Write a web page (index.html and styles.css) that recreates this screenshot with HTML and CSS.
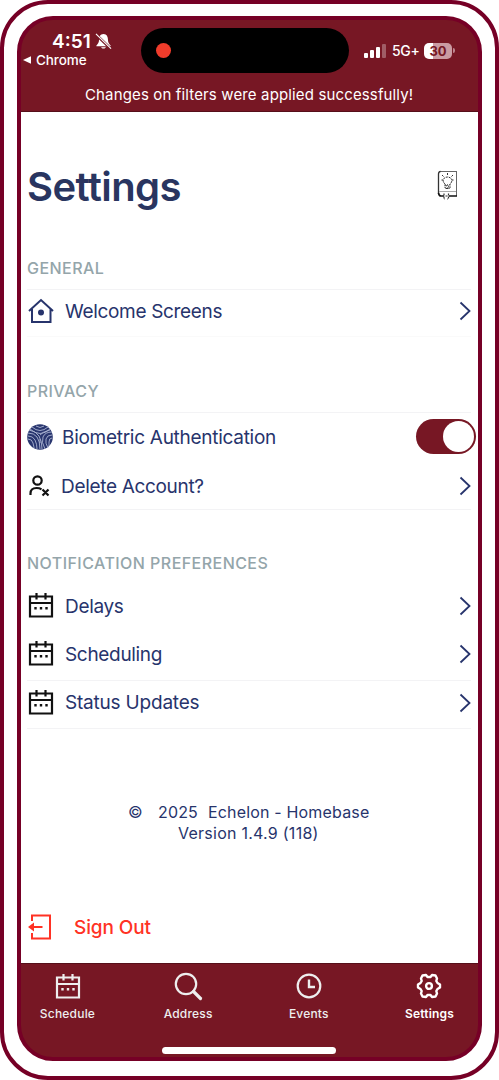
FILE: index.html
```html
<!DOCTYPE html>
<html lang="en">
<head>
<meta charset="utf-8">
<title>Settings</title>
<link rel="stylesheet" href="styles.css">
</head>
<body>
<svg class="defs" width="0" height="0">
  <symbol id="calendar" viewBox="0 0 26 26"><path d="M2 4.500h22v20H2zM1 11h24M8.500 1v6.500M17.500 1v6.500" fill="none" stroke="currentColor" stroke-width="2.200"/><path d="M6.300 15h2.400v2.400H6.300zM11.800 15h2.400v2.400h-2.400zM17.300 15h2.400v2.400h-2.400z" fill="currentColor"/></symbol>
  <symbol id="chevron" viewBox="0 0 12 20"><path d="M1.500 1.500 10.500 10 1.500 18.500" fill="none" stroke="currentColor" stroke-width="1.800"/></symbol>
</svg>
<div class="device">
<div class="screen">
  <header class="header">
    <div class="status">
      <div class="status-left">
        <div class="clock"><span class="time">4:51</span>
          <svg class="bell" viewBox="0 0 18 18"><path d="M9 1C5.500 1 4.300 4 4.300 7c0 3-1.200 4.600-2.800 6.200V14h15v-.8C14.900 11.600 13.700 10 13.700 7c0-3-1.200-6-4.700-6zM6.500 15h5c-.5 2-4.500 2-5 0z" fill="#fff"/><path d="m1 1.500 16 15.500" stroke="#771724" stroke-width="3"/><path d="m1 1 16 15.500" stroke="#fff" stroke-width="1.200"/></svg>
        </div>
        <div class="back"><svg class="back-arrow" viewBox="0 0 8 8"><path d="M0 4 8 .2v7.600z" fill="#fff"/></svg><span>Chrome</span></div>
      </div>
      <div class="island"><span class="rec"></span></div>
      <div class="status-right">
        <svg class="signal" viewBox="0 0 22 14"><g fill="#fff"><rect y="9" width="4" height="5" rx="1"/><rect x="6" y="6" width="4" height="8" rx="1"/><rect x="12" y="3" width="4" height="11" rx="1"/><rect x="18" width="4" height="14" rx="1" opacity=".3"/></g></svg>
        <span class="network">5G+</span>
        <span class="battery">30</span><span class="nub"></span>
      </div>
    </div>
    <div class="notice"><span>Changes on filters were applied successfully!</span></div>
  </header>

  <main class="content">
    <div class="title-row">
      <h1 class="title">Settings</h1>
      <svg class="guide" viewBox="0 0 22 30"><g fill="none" stroke="#333"><path d="M3 1.500h16.500v20H3" stroke="#666"/><path d="M1.500 24V4q0-2.500 2-2.500" stroke-width="1.300"/><path d="M2 21.500h18" stroke="#aaa"/><path d="M19.500 1v25" stroke="#666"/><path d="M1.500 23q.5 3 2.500 3h3M12 26h8" stroke="#111" stroke-width="1.600"/><path d="M7 23.500v5.500h1M11.500 23.500v5.500h-1.200M8.500 26h2" stroke-width="1.200" stroke-dasharray="2 1"/><path d="M8 14c-3.500-3-1.500-7 2.500-7s6 4 2.500 7v4H8zM9 18.500h3.500M8.500 14.500l1 2 1-2 1 2 1-2" stroke-dasharray="2 .8"/><path d="M10.500 3v2M5 5l1.500 1.500M16 5l-1.500 1.500M4.500 10H6M15 10h1.500"/></g></svg>
    </div>

    <section class="group general">
      <h2 class="label">GENERAL</h2>
      <div class="row welcome line-top">
        <svg class="icon home-icon" viewBox="0 0 26 26"><path d="M1 13 13 2l12 11M4 11v13h18.500V11" fill="none" stroke="currentColor" stroke-width="2"/><circle cx="13" cy="14.500" r="3" fill="currentColor"/></svg>
        <span class="text t-welcome">Welcome Screens</span><svg class="chevron"><use href="#chevron"/></svg>
      </div>
    </section>

    <section class="group privacy">
      <h2 class="label">PRIVACY</h2>
      <div class="row bio line-top">
        <svg class="icon finger" viewBox="0 0 26 26"><circle cx="13" cy="13" r="12.800" fill="#29366f"/><g fill="none" stroke="#adb5d3" stroke-width=".9"><path d="M5 3q8 7 16 0M3 5q10 9 20 0M9 2q4 3 8 0M1 9q6 0 9 4t3 12M1 12q5 0 7 4t2 9M1 15q4 0 5 4t1 5M2 6q7 1 10 6t3 13M25 8q-7 0-9 5t2 12M25 11q-5 0-6 4t2 9M25 14q-3 0-3 4t0 4M13 11q2-3 10-5M13 15v4"/></g></svg>
        <span class="text t-bio">Biometric Authentication</span><span class="toggle"><span class="knob"></span></span>
      </div>
      <div class="row line-bottom">
        <svg class="icon person" viewBox="0 0 24 24"><g fill="none" stroke="#111" stroke-width="2.200"><circle cx="9.500" cy="6.500" r="4.200"/><path d="M2.500 21v-1.500c0-4 3-5.500 6-5.500 2 0 3.500.3 5 1.300M14.500 15.500l6 6M20.500 15.500l-6 6"/></g></svg>
        <span class="text t-delete">Delete Account?</span><svg class="chevron"><use href="#chevron"/></svg>
      </div>
    </section>

    <section class="group prefs">
      <h2 class="label l-prefs">NOTIFICATION PREFERENCES</h2>
      <div class="row"><svg class="icon black"><use href="#calendar"/></svg><span class="text">Delays</span><svg class="chevron"><use href="#chevron"/></svg></div>
      <div class="row sched line-bottom"><svg class="icon black"><use href="#calendar"/></svg><span class="text">Scheduling</span><svg class="chevron"><use href="#chevron"/></svg></div>
      <div class="row line-bottom updates"><svg class="icon black"><use href="#calendar"/></svg><span class="text t-status">Status Updates</span><svg class="chevron"><use href="#chevron"/></svg></div>
    </section>

    <div class="about"><div class="copyright"><span class="copy-mark">©</span><span class="year">2025</span><span>Echelon - Homebase</span></div><div class="version">Version 1.4.9 (118)</div></div>

    <div class="signout">
      <svg class="exit" viewBox="0 0 24 26"><path d="M4 7V1.500h18v23H4V19M3 13h11.500" fill="none" stroke="#ff3224" stroke-width="2"/><path d="M0 13 6 8.500v9z" fill="#ff3224"/></svg>
      <span>Sign Out</span>
    </div>
  </main>

  <nav class="tabs">
    <div class="tab"><svg class="tab-icon"><use href="#calendar"/></svg><span>Schedule</span></div>
    <div class="tab"><svg class="tab-icon" viewBox="0 0 26 26"><circle cx="11" cy="11" r="10.200" fill="none" stroke="#eee" stroke-width="2.200"/><path d="m18.500 18.500 7 7" stroke="#eee" stroke-width="3.200" stroke-linecap="round"/></svg><span>Address</span></div>
    <div class="tab"><svg class="tab-icon" viewBox="0 0 26 26"><circle cx="13" cy="13" r="11.300" fill="none" stroke="#eee" stroke-width="2.200"/><path d="M13 6.500V14h6" fill="none" stroke="#eee" stroke-width="2.400"/></svg><span>Events</span></div>
    <div class="tab active"><svg class="tab-icon" viewBox="0 0 26 26"><g fill="none" stroke="#fff" stroke-width="2.400" stroke-linejoin="round"><path d="M6.500 2.500 10 2l1.500 2h3L16 2l3.500.5 1.500 3-.7 2.500 1.200 2L24 11.500v3L21.500 16l-1.200 2 .7 2.500-1.500 3L16 24l-1.500-2h-3L10 24l-3.500-.5-1.500-3 .7-2.500-1.200-2L2 14.500v-3L4.500 10l1.200-2L5 5.500z"/><circle cx="13" cy="13" r="2.900"/></g></svg><span>Settings</span></div>
    <div class="home"></div>
  </nav>
</div>
</div>
</body>
</html>
```
FILE: styles.css
```css
* { box-sizing: border-box; }
body { margin: 0; background: #fff; font-family: Inter, "Liberation Sans", sans-serif; color: #27346c; }
svg { display: block; flex: none; overflow: visible; }
.defs { position: absolute; }
.device { width: 499px; height: 1080px; border: 4px solid #760026; border-radius: 48px; padding: 12px 13px 15px; }
.screen { height: 1045px; border: 4px solid #760026; border-radius: 36px; overflow: hidden; display: flex; flex-direction: column; background: #771724; }
.header { height: 92px; color: #fff; border-bottom: 1px solid #560f1a; flex: none; }
.status { height: 60px; display: flex; padding-top: 8px; }
.status-left { width: 120px; padding-top: 3px; }
.clock { display: flex; height: 21px; align-items: center; padding-left: 31px; gap: 4px; }
.time { font-size: 19px; font-weight: 600; width: 39px; white-space: nowrap; }
.bell { width: 17px; height: 17px; }
.back { display: flex; align-items: center; height: 16px; padding-left: 2px; gap: 5px; font-size: 13.500px; font-weight: 500; letter-spacing: -.1px; }
.back-arrow { width: 8px; height: 8px; }
.island { width: 208px; height: 45px; border-radius: 23px; background: #000; padding: 15px; }
.rec { display: block; width: 15px; height: 15px; border-radius: 50%; background: #f03c2b; }
.status-right { display: flex; height: 45px; align-items: center; padding-left: 15px; }
.signal { width: 22px; height: 14px; }
.network { width: 28px; margin-left: 6px; font-size: 14px; font-weight: 500; letter-spacing: -.3px; }
.battery { width: 28px; height: 16px; margin-left: 4px; border-radius: 5px; background: linear-gradient(90deg, #fff 9px, #cb9ba2 9px); color: #771724; font-size: 13px; line-height: 16px; font-weight: 700; text-align: center; }
.nub { width: 2px; height: 5px; margin-left: 1px; border-radius: 0 2px 2px 0; background: #bd858e; }
.notice { height: 29px; display: flex; align-items: center; padding-left: 64px; font-size: 15px; letter-spacing: .14px; white-space: nowrap; }
.content { height: 851px; flex: none; padding: 0 7px 0 6px; background: #fff; }
.title-row { height: 143px; display: flex; justify-content: space-between; padding: 50px 13px 0 0; }
.title { margin: 0; font-size: 40px; line-height: 50px; font-weight: 600; letter-spacing: -.6px; color: #293560; }
.guide { width: 22px; height: 30px; margin-top: 8px; margin-right: -1px; }
.label { margin: 0; height: 34px; line-height: 26px; font-size: 16px; font-weight: 500; letter-spacing: .45px; color: #94a5aa; white-space: nowrap; }
.group { display: flex; flex-direction: column; }
.general { height: 123px; }
.privacy { height: 172px; }
.row { height: 48px; display: flex; align-items: center; border: 0 solid #f3f3f5; flex: none; }
.line-top { border-top-width: 1px; }
.line-bottom { border-bottom-width: 1px; }
.welcome { padding-bottom: 4px; border-bottom: 1px solid #fafafa; }
.home-icon { margin-top: -1px; }
.icon { width: 26px; height: 26px; margin-left: 1px; }
.text { flex: 1; margin-left: 11px; font-size: 19px; letter-spacing: -.32px; white-space: nowrap; }
.chevron { width: 12px; height: 20px; }
.black { color: #111; margin-top: -2px; }
.bio { height: 50px; }
.finger { margin-left: 0; margin-top: -2px; }
.t-bio { margin-left: 9px; letter-spacing: -.28px; }
.toggle { width: 60px; height: 35px; border-radius: 18px; background: #771724; display: flex; justify-content: flex-end; padding: 2px; margin: -3px -5px 0 0; flex: none; }
.knob { width: 31px; height: 31px; border-radius: 50%; background: #fff; }
.person { width: 24px; height: 24px; }
.t-delete { margin-left: 9px; padding-top: 1px; }
.prefs { height: 252px; }
.l-prefs { height: 32px; }
.t-status { letter-spacing: -.2px; }
.sched { height: 51px; padding-bottom: 2px; }
.updates { padding-bottom: 4px; }
.about { font-size: 16px; line-height: 20px; height: 102px; letter-spacing: .17px; }
.copyright { display: flex; padding-left: 101px; white-space: pre; }
.copy-mark { width: 30px; }
.year { width: 50px; }
.version { padding-left: 151px; line-height: 22px; letter-spacing: .25px; }
.signout { display: flex; height: 26px; align-items: center; gap: 22px; color: #ff3224; font-size: 19px; font-weight: 500; letter-spacing: -.1px; margin-top: 10px; padding-left: 1px; }
.exit { width: 24px; height: 26px; }
.tabs { height: 94px; border-top: 1px solid #560f1a; display: flex; justify-content: space-between; padding: 9px 20px 0 18px; position: relative; }
.tab { width: 57px; height: 50px; display: flex; flex-direction: column; align-items: center; color: #eee; font-size: 12px; line-height: 16px; font-weight: 500; letter-spacing: .2px; gap: 7px; }
.tab-icon { width: 26px; height: 26px; }
.active { color: #fff; font-weight: 600; }
.home { position: absolute; left: 141px; bottom: 3px; width: 174px; height: 7px; border-radius: 4px; background: #fff; }
```
